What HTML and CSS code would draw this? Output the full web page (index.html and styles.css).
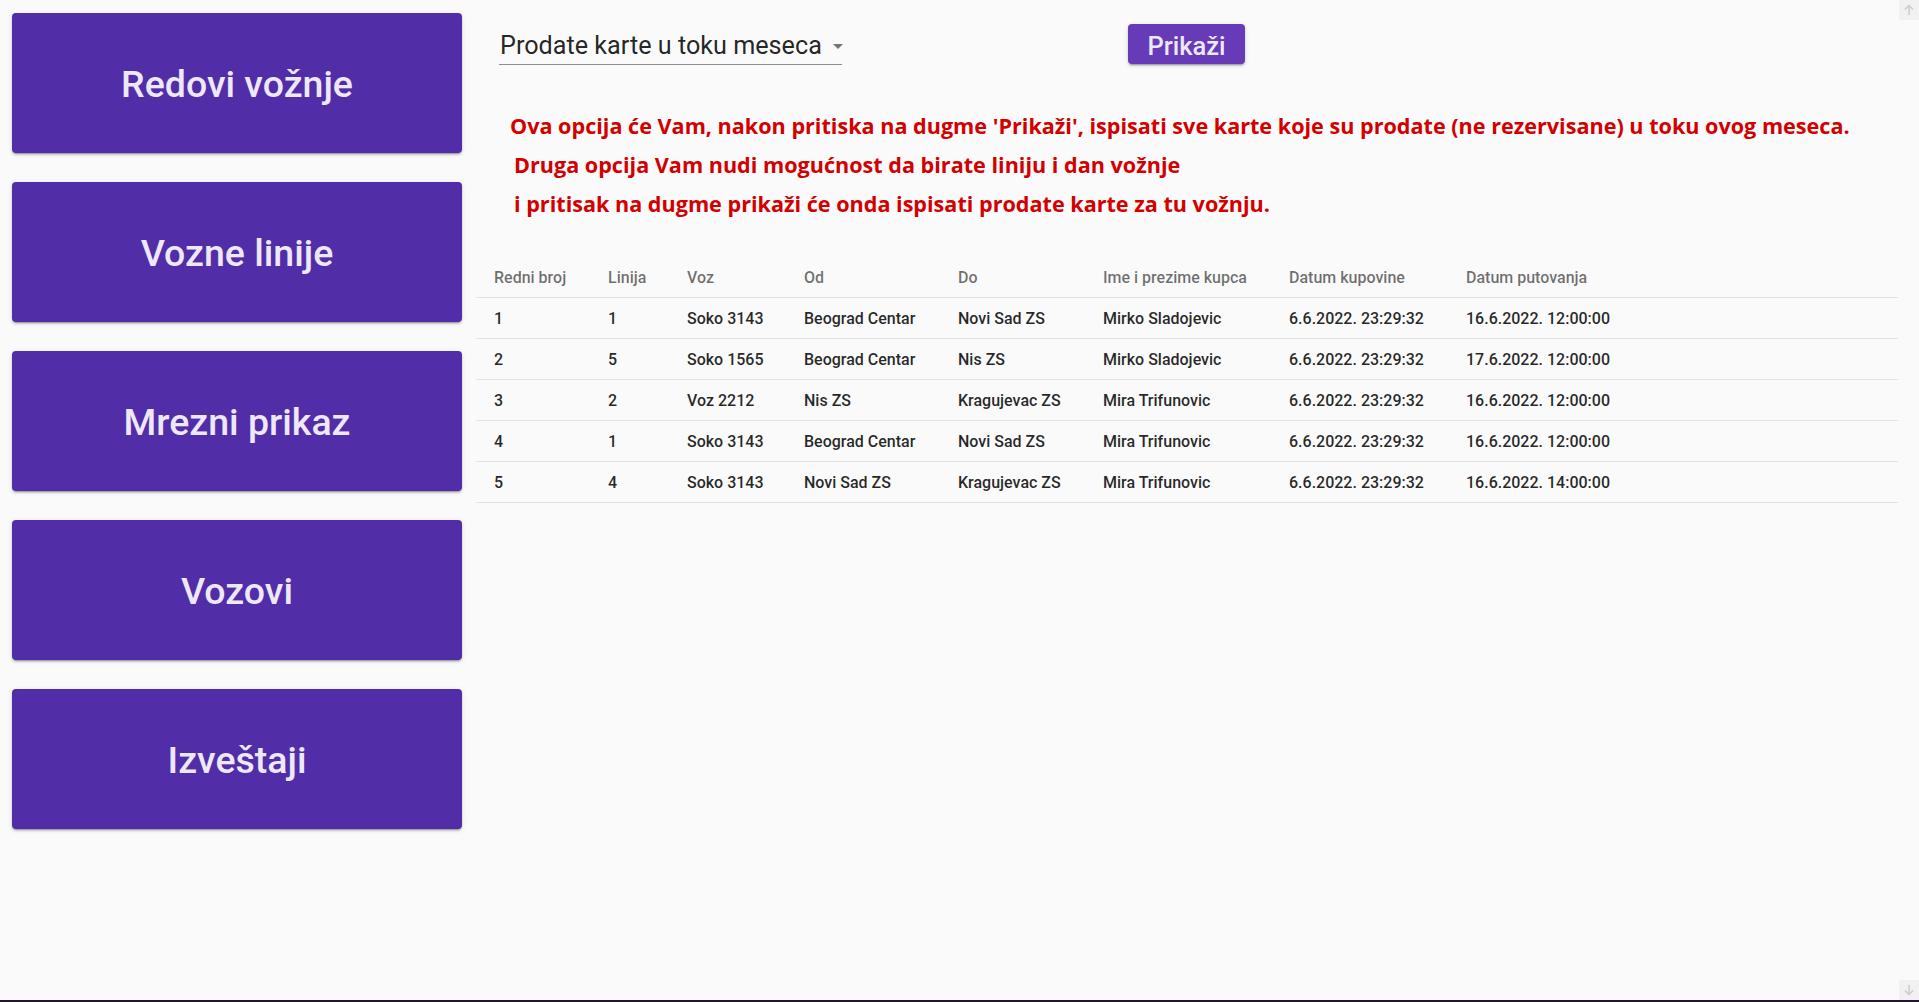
FILE: index.html
```html
<!DOCTYPE html>
<html lang="sr">
<head>
<meta charset="utf-8">
<title>Izveštaji</title>
<link rel="stylesheet" href="styles.css">
</head>
<body>
<div class="layout">
  <nav class="sidebar">
    <button class="nav-btn">Redovi vožnje</button>
    <button class="nav-btn">Vozne linije</button>
    <button class="nav-btn">Mrezni prikaz</button>
    <button class="nav-btn">Vozovi</button>
    <button class="nav-btn">Izveštaji</button>
  </nav>
  <main class="main">
    <div class="toolbar">
      <div class="select">
        <span class="select-value">Prodate karte u toku meseca</span>
        <span class="select-arrow"></span>
      </div>
      <button class="show-btn">Prikaži</button>
    </div>
    <div class="info">
      <div class="info-line">Ova opcija će Vam, nakon pritiska na dugme 'Prikaži', ispisati sve karte koje su prodate (ne rezervisane) u toku ovog meseca.</div>
      <div class="info-line indent">Druga opcija Vam nudi mogućnost da birate liniju i dan vožnje</div>
      <div class="info-line indent">i pritisak na dugme prikaži će onda ispisati prodate karte za tu vožnju.</div>
    </div>
    <table class="tickets">
      <colgroup>
        <col class="c1"><col class="c2"><col class="c3"><col class="c4"><col class="c5"><col class="c6"><col class="c7"><col class="c8">
      </colgroup>
      <thead>
        <tr>
          <th>Redni broj</th><th>Linija</th><th>Voz</th><th>Od</th><th>Do</th><th>Ime i prezime kupca</th><th>Datum kupovine</th><th>Datum putovanja</th>
        </tr>
      </thead>
      <tbody>
        <tr><td>1</td><td>1</td><td>Soko 3143</td><td>Beograd Centar</td><td>Novi Sad ZS</td><td>Mirko Sladojevic</td><td>6.6.2022. 23:29:32</td><td>16.6.2022. 12:00:00</td></tr>
        <tr><td>2</td><td>5</td><td>Soko 1565</td><td>Beograd Centar</td><td>Nis ZS</td><td>Mirko Sladojevic</td><td>6.6.2022. 23:29:32</td><td>17.6.2022. 12:00:00</td></tr>
        <tr><td>3</td><td>2</td><td>Voz 2212</td><td>Nis ZS</td><td>Kragujevac ZS</td><td>Mira Trifunovic</td><td>6.6.2022. 23:29:32</td><td>16.6.2022. 12:00:00</td></tr>
        <tr><td>4</td><td>1</td><td>Soko 3143</td><td>Beograd Centar</td><td>Novi Sad ZS</td><td>Mira Trifunovic</td><td>6.6.2022. 23:29:32</td><td>16.6.2022. 12:00:00</td></tr>
        <tr><td>5</td><td>4</td><td>Soko 3143</td><td>Novi Sad ZS</td><td>Kragujevac ZS</td><td>Mira Trifunovic</td><td>6.6.2022. 23:29:32</td><td>16.6.2022. 14:00:00</td></tr>
      </tbody>
    </table>
  </main>
</div>
<div class="scroll-btn scroll-up">
  <svg width="12" height="12" viewBox="0 0 12 12"><path d="M6 1.5V11M1.8 5.6L6 1.5l4.2 4.1" fill="none" stroke="#cfcfcf" stroke-width="1.6"/></svg>
</div>
<div class="scroll-btn scroll-down">
  <svg width="12" height="12" viewBox="0 0 12 12"><path d="M6 1V10.5M1.8 6.4L6 10.5l4.2-4.1" fill="none" stroke="#cfcfcf" stroke-width="1.6"/></svg>
</div>
<div class="bottom-edge"></div>
</body>
</html>
```
FILE: styles.css
```css
html, body {
  margin: 0;
  padding: 0;
}
body {
  background: #fafafa;
  height: 1002px;
  overflow: hidden;
  font-family: Roboto, "Noto Sans", sans-serif;
  position: relative;
}
.layout {
  display: flex;
  align-items: flex-start;
  padding-left: 12px;
}
.sidebar {
  width: 450px;
  flex: 0 0 450px;
  display: flex;
  flex-direction: column;
  gap: 29px;
  padding-top: 13px;
}
.nav-btn {
  height: 140px;
  border: none;
  border-radius: 4px;
  background: #512da8;
  color: #ede7f6;
  font-family: Roboto, sans-serif;
  font-weight: 500;
  font-size: 37.5px;
  line-height: 44px;
  padding: 2px 0 0 0;
  box-shadow: 0 3px 1px -2px rgba(0,0,0,.2), 0 2px 2px 0 rgba(0,0,0,.14), 0 1px 5px 0 rgba(0,0,0,.12);
  cursor: pointer;
}
.main {
  margin-left: 14px;
  width: 1422px;
  flex: 0 0 1422px;
}
.toolbar {
  display: flex;
  align-items: flex-start;
  padding-top: 24px;
  padding-left: 23px;
}
.select {
  width: 343px;
  flex: 0 0 343px;
  margin-top: 8px;
  display: flex;
  align-items: center;
  border-bottom: 1px solid #8e8e8e;
  padding-bottom: 4px;
  line-height: 28px;
}
.select-value {
  font-size: 25.2px;
  color: rgba(0,0,0,.87);
  padding-left: 1px;
  white-space: nowrap;
  flex: 0 0 auto;
}
.select-arrow {
  flex: 0 0 auto;
  margin-left: 11px;
  margin-top: 1px;
  width: 0;
  height: 0;
  border-left: 5px solid transparent;
  border-right: 5px solid transparent;
  border-top: 5px solid #757575;
}
.show-btn {
  flex: 0 0 117px;
  margin-left: 286px;
  width: 117px;
  height: 40px;
  border: none;
  border-radius: 4px;
  background: #673ab7;
  color: #ede7f6;
  font-family: Roboto, sans-serif;
  font-weight: 500;
  font-size: 25.5px;
  line-height: 40px;
  padding: 2px 0 0 0;
  box-shadow: 0 3px 1px -2px rgba(0,0,0,.2), 0 2px 2px 0 rgba(0,0,0,.14), 0 1px 5px 0 rgba(0,0,0,.12);
}
.info {
  margin-top: 41px;
  padding-left: 34px;
  font-family: "Open Sans", Lato, sans-serif;
  font-weight: 700;
  font-size: 21.6px;
  line-height: 39px;
  color: #d20000;
  white-space: nowrap;
}
.info-line.indent {
  padding-left: 4px;
}
.tickets {
  margin-top: 34px;
  width: 1422px;
  border-collapse: collapse;
  table-layout: fixed;
  font-family: Roboto, sans-serif;
}
.c1 { width: 114px; }
.c2 { width: 79px; }
.c3 { width: 117px; }
.c4 { width: 154px; }
.c5 { width: 145px; }
.c6 { width: 186px; }
.c7 { width: 177px; }
.tickets th,
.tickets td {
  text-align: left;
  padding: 0 0 0 18px;
  height: 40px;
  border-bottom: 1px solid #e3e3e3;
  white-space: nowrap;
  font-size: 16px;
  font-weight: 500;
}
.tickets th {
  color: rgba(0,0,0,.56);
}
.tickets td {
  color: rgba(0,0,0,.85);
}
.scroll-btn {
  position: absolute;
  right: 0;
  width: 20px;
  height: 20px;
  background: #f1f1f1;
  display: flex;
  align-items: center;
  justify-content: center;
}
.scroll-up { top: 0; }
.scroll-down { top: 980px; }
.bottom-edge {
  position: absolute;
  left: 0;
  right: 0;
  bottom: 0;
  height: 2px;
  background: #24152b;
}
```
